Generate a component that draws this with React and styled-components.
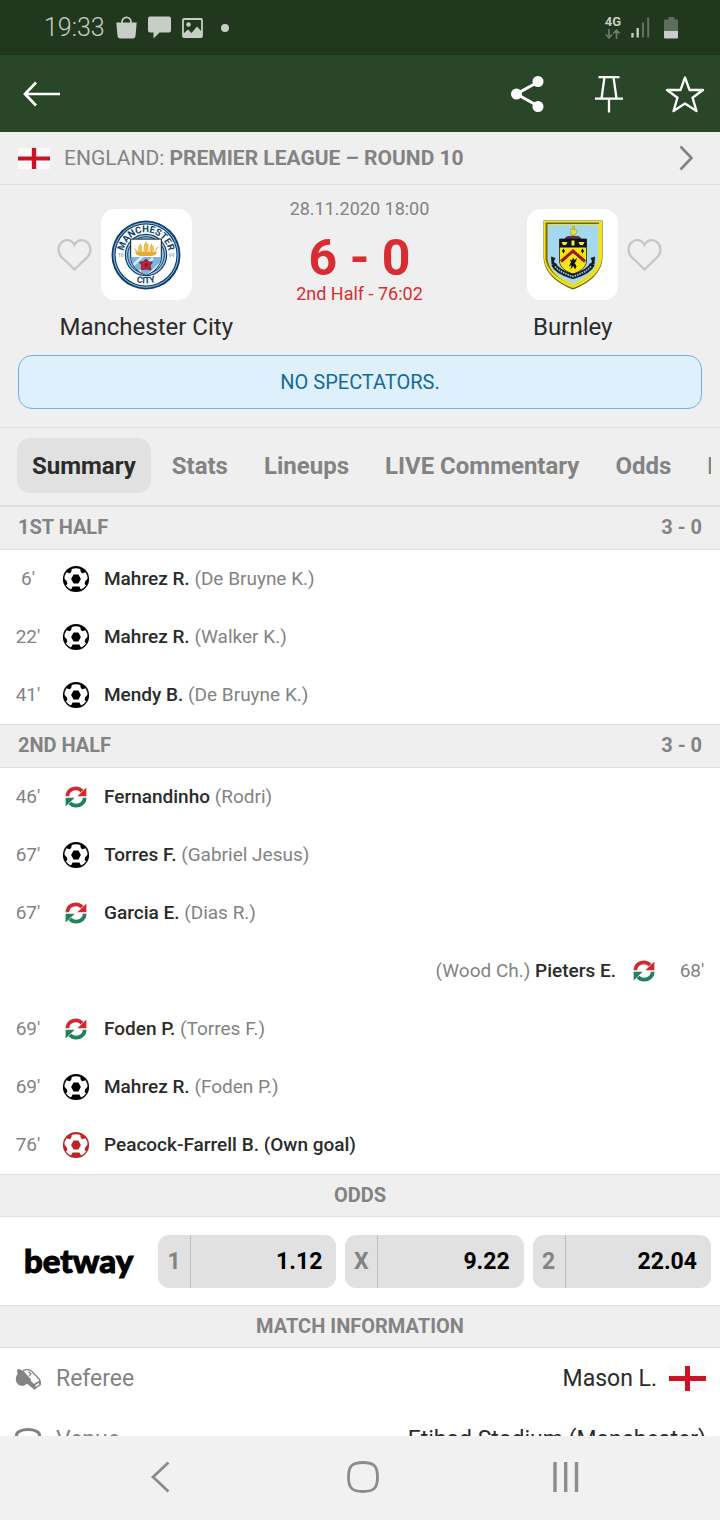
import React from "react";
import styled, { createGlobalStyle, css } from "styled-components";

const c = {
  status: "#21381f",
  bar: "#294728",
  panel: "#efefef",
  line: "#dfdfdf",
  chip: "#e1e1e1",
  muted: "#838383",
  ink: "#2b2b2b",
  red: "#d92c32",
  statusInk: "#c6cec6",
};

const GlobalStyle = createGlobalStyle`
  *, *::before, *::after { box-sizing: border-box; }
  body { margin: 0; background: #fff; font-family: Roboto, "Liberation Sans", sans-serif; color: ${c.ink}; }
  button { font: inherit; color: inherit; border: 0; padding: 0; background: none; cursor: pointer; }
  h1, h2, p, ul { margin: 0; padding: 0; font-weight: inherit; font-size: inherit; }
  ul { list-style: none; }
  svg { display: block; flex: none; }
`;

const Screen = styled.div`
  display: flex;
  flex-direction: column;
  height: 100vh;
`;

const StatusBar = styled.div`
  flex: none;
  display: flex;
  align-items: center;
  height: 55px;
  padding: 0 36px 0 44px;
  background: ${c.status};
  color: ${c.statusInk};
`;

const Clock = styled.time`
  font-size: 25px;
  font-weight: 300;
  line-height: 32px;
  width: 72px;
  white-space: nowrap;
`;

const StatusIcons = styled.div`
  display: flex;
  align-items: center;
  gap: 11px;
`;

const StatusRight = styled(StatusIcons)`
  margin-left: auto;
  gap: 10px;
`;

const Network = styled.div`
  display: flex;
  flex-direction: column;
  align-items: center;
  gap: 1px;
  font-size: 13px;
  font-weight: 700;
  line-height: 12px;
`;

const AppBar = styled.header`
  flex: none;
  display: flex;
  align-items: center;
  justify-content: space-between;
  height: 77px;
  padding: 0 15px 0 22px;
  background: ${c.bar};
  color: #fff;
`;

const Actions = styled.div`
  display: flex;
  align-items: center;
  gap: 42px;
`;

const IconButton = styled.button`
  display: flex;
  align-items: center;
  justify-content: center;
`;

const Content = styled.main`
  flex: 1;
  min-height: 0;
  overflow-y: auto;
  scrollbar-width: none;
`;

const League = styled.a`
  display: flex;
  align-items: center;
  height: 53px;
  padding: 0 26px 0 18px;
  background: ${c.panel};
  border-bottom: 1px solid ${c.line};
  color: ${c.muted};
  font-size: 21px;
  text-decoration: none;
  white-space: nowrap;
`;

const LeagueText = styled.span`
  flex: 1;
  padding-left: 14px;
`;

const MatchHeader = styled.section`
  padding: 12px 0 18px;
  background: ${c.panel};
  border-bottom: 1px solid ${c.line};
`;

const Teams = styled.div`
  display: grid;
  grid-template-columns: 1fr 134px 1fr;
  padding-right: 1px;
`;

const Team = styled.div`
  display: flex;
  flex-direction: column;
  align-items: center;
  gap: 11px;
  padding-top: 12px;
`;

const TeamBadges = styled.div`
  display: grid;
  grid-template-columns: 1fr auto 1fr;
  align-items: center;
  width: 100%;
`;

const Favourite = styled(IconButton)`
  grid-row: 1;
  grid-column: ${(p) => (p.$side === "left" ? 1 : 3)};
  justify-self: ${(p) => (p.$side === "left" ? "end" : "start")};
  padding: 0 9px;
`;

const Crest = styled.div`
  grid-column: 2;
  grid-row: 1;
  display: flex;
  align-items: center;
  justify-content: center;
  width: 91px;
  height: 91px;
  border-radius: 14px;
  background: #fff;
`;

const TeamName = styled.p`
  font-size: 24px;
  line-height: 32px;
  white-space: nowrap;
`;

const ScoreBox = styled.div`
  display: flex;
  flex-direction: column;
  align-items: center;
  white-space: nowrap;
  color: ${c.red};
`;

const Kickoff = styled.time`
  font-size: 18px;
  line-height: 24px;
  color: ${c.muted};
`;

const Score = styled.h1`
  font-size: 50px;
  font-weight: 700;
  line-height: 50px;
  padding: 12px 0 0;
`;

const MatchTime = styled.p`
  font-size: 18px;
  line-height: 22px;
`;

const Notice = styled.p`
  margin: 12px 18px 0;
  padding: 14px;
  border: 1px solid #6fb3de;
  border-radius: 14px;
  background: #def0fc;
  color: #17699b;
  font-size: 20px;
  line-height: 24px;
  text-align: center;
`;

const TabsBar = styled.div`
  background: ${c.panel};
  border-bottom: 2px solid ${c.line};
  padding-right: 9px;
`;

const Tabs = styled.nav`
  display: flex;
  gap: 6px;
  padding: 10px 0 12px 17px;
  overflow: hidden;
`;

const Tab = styled.button`
  flex: none;
  height: 55px;
  padding: 0 15px;
  border-radius: 13px;
  font-size: 24px;
  font-weight: 700;
  color: ${c.muted};
  ${(p) => p.$active && css`
    background: ${c.chip};
    color: ${c.ink};
  `}
`;

const SectionHead = styled.h2`
  display: flex;
  justify-content: ${(p) => (p.$center ? "center" : "space-between")};
  padding: 8px 18px ${(p) => (p.$center ? 9 : 10)}px;
  background: ${c.panel};
  border-top: ${(p) => (p.$first ? 0 : 1)}px solid ${c.line};
  border-bottom: 1px solid ${c.line};
  color: ${c.muted};
  font-size: 20px;
  font-weight: 700;
  line-height: 24px;
`;

const EventRow = styled.li`
  display: flex;
  flex-direction: ${(p) => (p.$away ? "row-reverse" : "row")};
  align-items: center;
  height: 58px;
  font-size: 19px;
  white-space: nowrap;
`;

const Minute = styled.span`
  width: 56px;
  padding-bottom: 2px;
  text-align: center;
  color: ${c.muted};
`;

const EventIcon = styled.span`
  display: flex;
  justify-content: center;
  width: 40px;
`;

const EventText = styled.span`
  padding: 0 8px 2px;
  color: ${c.muted};
`;

const Player = styled.span`
  font-weight: 500;
  color: ${c.ink};
`;

const OddsRow = styled.div`
  display: grid;
  grid-template-columns: 140px 1fr 1fr 1fr;
  gap: 9px;
  align-items: center;
  padding: 18px 9px 17px;
`;

const Bookmaker = styled.a`
  padding: 0 0 4px 15px;
  color: #000;
  font-family: Lato, Roboto, sans-serif;
  font-size: 33px;
  font-weight: 900;
  line-height: 40px;
  text-decoration: none;
  -webkit-text-stroke: 1px #000;
`;

const Odd = styled.button`
  display: flex;
  align-items: stretch;
  height: 53px;
  border-radius: 11px;
  background: ${c.chip};
  font-size: 23px;
  font-weight: 700;
  line-height: 53px;
`;

const OddLabel = styled.span`
  width: 33px;
  border-right: 1px solid #bdbdbd;
  color: ${c.muted};
`;

const OddValue = styled.span`
  flex: 1;
  padding-right: 14px;
  text-align: right;
  color: #000;
`;

const InfoRow = styled.li`
  display: flex;
  align-items: center;
  height: 61px;
  padding: 0 14px 0 15px;
  font-size: 23px;
  white-space: nowrap;
`;

const InfoLabel = styled.span`
  flex: 1;
  padding-left: 14px;
  color: ${c.muted};
`;

const InfoValue = styled.span`
  display: flex;
  align-items: center;
  gap: 12px;
`;

const SystemNav = styled.nav`
  flex: none;
  display: grid;
  grid-template-columns: repeat(3, 1fr);
  height: 84px;
  padding: 0 53px 2px 59px;
  background: #f1f1f1;
  color: #8c8c8c;
`;

function Flag({ width, height }) {
  return (
    <svg width={width} height={height} viewBox="0 0 37 25" preserveAspectRatio="none" role="img" aria-label="England">
      <rect width="37" height="25" fill="#fafafa" />
      <path d="M0 12.5H37M18.5 0V25" stroke="#cd1226" strokeWidth="5" />
    </svg>
  );
}

function Heart() {
  return (
    <svg width="35" height="33" viewBox="0 0 35 33" fill="none" stroke="#c6c6c6" strokeWidth="2.3">
      <path d="M17.5 31.500 4.500 19C1 15.500.300 9 4 5 8 .700 14.500 1.200 17.500 7 20.500 1.200 27 .700 31 5 34.700 9 34 15.500 30.500 19Z" />
    </svg>
  );
}

function CityCrest() {
  const navy = "#0f3e6e";
  return (
    <svg width="70" height="70" viewBox="0 0 70 70" role="img" aria-label="Manchester City crest">
      <defs>
        <path id="cityTop" d="M12.300 35A22.700 22.700 0 0 1 57.700 35" />
        <path id="cityLow" d="M6.500 35A28.500 28.500 0 0 0 63.500 35" />
        <clipPath id="cityShield"><path d="M20 20H50V36C50 46 42 52 35 54.500 28 52 20 46 20 36Z" /></clipPath>
      </defs>
      <circle cx="35" cy="35" r="34.500" fill={navy} />
      <circle cx="35" cy="35" r="32.200" fill="none" stroke="#9cc6e8" strokeWidth="1" />
      <circle cx="35" cy="35" r="30.500" fill="#fff" />
      <circle cx="35" cy="35" r="20.600" fill="#9cc6e8" stroke={navy} strokeWidth="1.200" />
      <circle cx="35" cy="35" r="18.300" fill="#9cc6e8" stroke={navy} strokeWidth="1" />
      <path d="M19.500 19H50.500V36C50.500 46.500 42 52.500 35 55.500 28 52.500 19.500 46.500 19.500 36Z" fill="#d6a63c" stroke={navy} strokeWidth="1" />
      <g clipPath="url(#cityShield)">
        <rect x="20.500" y="20" width="29" height="17" fill="#fff" />
        <rect x="20" y="37" width="30" height="20" fill="#7fb4e0" />
        <path d="M15 52 32 36M20 60 42 38M30 62 52 41" stroke="#d9ebf8" strokeWidth="2.500" />
      </g>
      <path d="M24 31.500H46C45.500 34.500 43 36 40.500 36H29.500C27 36 24.500 34.500 24 31.500Z" fill="#e6ac32" />
      <path d="M35 21.500V33M29.500 24V32M40.500 24V32M44 30.500 47 27M26 31.500 23.500 28.500" stroke="#d3982c" strokeWidth="1" />
      <path d="M33 23.500H37.500V31H32.500ZM27.500 25.500H31V31H26.500ZM39 25.500H42.500L43 31H38.500Z" fill="#eebd54" />
      <path d="M35 39 37.500 41.700 41.500 42 39.300 45.500 40 50 35 49 30 50 30.700 45.500 28.500 42 32.500 41.700Z" fill="#c41e3a" stroke="#5a1d28" strokeWidth=".7" />
      <circle cx="35" cy="45" r="1.800" fill="#7d1a30" />
      <g fill={navy} fontFamily="Roboto, sans-serif" fontWeight="700" textAnchor="middle">
        <text fontSize="9.500"><textPath href="#cityTop" startOffset="50%">MANCHESTER</textPath></text>
        <text fontSize="9"><textPath href="#cityLow" startOffset="50%">CITY</textPath></text>
      </g>
      <g fill="#8fb8da" fontFamily="Roboto, sans-serif" fontWeight="700" fontSize="5" textAnchor="middle">
        <text x="9.500" y="37">18</text>
        <text x="60.500" y="37">94</text>
      </g>
    </svg>
  );
}

function BurnleyCrest() {
  return (
    <svg width="60" height="70" viewBox="0 0 60 70" role="img" aria-label="Burnley crest">
      <path d="M.5.5H59.500V37C59.500 53 45 64 30 69.500 15 64 .5 53 .5 37Z" fill="#6f641a" />
      <path d="M1 1H59V37C58.800 52 45 62.500 30 68 15 62.500 1.200 52 1 37Z" fill="#efe51c" />
      <path d="M2.600 2.600H56V37C56 50 44 60 30 65.500 16 60 2.600 50 2.600 37Z" fill="#6f6522" />
      <path d="M4.500 4H56.500V37C56.500 50 44 60 30 65.500 16 60 4.500 50 4.500 37Z" fill="#e9e03a" />
      <path d="M5 5H55V37C55 48.500 43 58 30 63.500 17 58 5 48.500 5 37Z" fill="#a3d8ee" />
      <path d="M28 15V11.500C26.500 9 29 8 30 9.500L29.500 6.500 31.500 6 31 10C33 9 34.500 10 34 12L32 15Z" fill="#eee32a" stroke="#8a8222" strokeWidth=".5" />
      <path d="M22 18.500C25 15 27 17.500 30 16 33 17.500 35 15 38 18.500Z" fill="#8d1d3a" stroke="#23284f" strokeWidth=".8" />
      <path d="M16.500 19H43.500V41C43.500 48 36 52 30 54 24 52 16.500 48 16.500 41Z" fill="#f5e70f" stroke="#222" strokeWidth=".8" />
      <path d="M16.500 19H43.500V27.500H16.500Z" fill="#111" />
      <path d="M18.500 22H24.500L23 25H20ZM35.500 22H41.500L40 25H37Z" fill="#f1e556" />
      <path d="M28.500 20.500H31.500V25.500H28.500Z" fill="#f1e556" />
      <path d="M18 41.500 30 31 42 41.500" fill="none" stroke="#a3161f" strokeWidth="3" />
      <path d="M20.500 28.500 22 31 20.500 33.500 19 31ZM39.500 28.500 41 31 39.500 33.500 38 31Z" fill="#111" />
      <path d="M30 37.500 31.500 40 34 38 33 41.500 31.500 43 33.500 46 32 49.500 30.500 46 27.500 49.500 28.500 45 26 46.500 28 42 26.500 39.500 29 40.500Z" fill="#111" />
      <path d="M10.500 44C13 50 21 54 30 56.500 39 54 47 50 49.500 44" fill="none" stroke="#171c22" strokeWidth="5" />
      <path d="M12 46.500C16 51 23 54.500 30 56.500 37 54.500 44 51 48 46.500" fill="none" stroke="#a5cfe2" strokeWidth="1.600" strokeDasharray="1.600 .9" />
      <path d="M8 36.500 12.500 38 11 41 12.500 45 8.500 44ZM52 36.500 47.500 38 49 41 47.500 45 51.500 44Z" fill="#171c22" />
    </svg>
  );
}

function Ball({ color = "#000" }) {
  return (
    <svg width="28" height="28" viewBox="0 0 28 28" role="img" aria-label="Goal">
      <circle cx="14" cy="14" r="13.100" fill={color} />
      <path
        fill="#fff"
        d="M9.800 3.900Q14 2.400 18.200 3.900L18.900 7.300 20.500 8.300 23.500 7.300Q25.700 10.600 25.500 13.800L23.200 16.200 22.600 18.700 24 20.500Q22 23.300 19 24.500L17.400 21.600H10.600L9 24.500Q6 23.300 4 20.500L5.400 18.700 4.800 16.200 2.500 13.800Q2.300 10.600 4.500 7.300L7.500 8.300 9.100 7.300Z"
      />
      <path fill={color} d="M11.600 9.500H16.400L18.900 14 16.400 18.500H11.600L9.100 14Z" />
    </svg>
  );
}

function Swap() {
  return (
    <svg width="22" height="22" viewBox="0 0 22 22" role="img" aria-label="Substitution">
      <path d="M2.300 10.200C2.300 5.700 6 2.300 10.700 2.300 13.500 2.300 15.600 3.300 17 5.100" fill="none" stroke="#d2292f" strokeWidth="3.800" />
      <path d="M21.400 1.600V10.200H12.400Z" fill="#d2292f" />
      <path d="M19.700 11.800C19.700 16.300 16 19.700 11.300 19.700 8.500 19.700 6.400 18.700 5 16.900" fill="none" stroke="#22805c" strokeWidth="3.800" />
      <path d="M.6 20.400V11.800H9.600Z" fill="#22805c" />
    </svg>
  );
}

function Whistle() {
  return (
    <svg width="27" height="22" viewBox="0 0 27 22" fill={c.muted}>
      <path d="M2 2.300Q3.500.200 5.500 1.500L9 3.500 16 11.500 15 15 12 15.500C9.500 18.300 5.500 18.500 3 16.300.200 13.500.200 9 2.500 6Z" />
      <path d="M8 2.800C10 1.200 14.500 1.200 17 3.500L24.500 11.500Q25.800 13.500 25 16" fill="none" stroke={c.muted} strokeWidth="1.300" />
      <path d="M13.500 3.500 16 6 14 8" fill="none" stroke={c.muted} strokeWidth="1.200" />
      <path d="M12 9 21 18 18.500 21 9.500 13.500Z" />
      <path d="M19.500 16.500 24.500 13.500 25.200 16.500 19.500 20.800Z" fill="none" stroke={c.muted} strokeWidth="1.500" />
    </svg>
  );
}

function Stadium() {
  return (
    <svg width="27" height="24" viewBox="0 0 27 24" fill="none" stroke={c.muted} strokeWidth="3">
      <ellipse cx="13" cy="7" rx="11.500" ry="5.500" />
      <path d="M1.500 7V16C1.500 19.500 6.500 22 13 22S24.500 19.500 24.500 16V7" />
    </svg>
  );
}

const tabs = ["Summary", "Stats", "Lineups", "LIVE Commentary", "Odds", "H2H"];

const firstHalf = [
  { min: "6'", type: "goal", player: "Mahrez R.", extra: "(De Bruyne K.)" },
  { min: "22'", type: "goal", player: "Mahrez R.", extra: "(Walker K.)" },
  { min: "41'", type: "goal", player: "Mendy B.", extra: "(De Bruyne K.)" },
];

const secondHalf = [
  { min: "46'", type: "sub", player: "Fernandinho", extra: "(Rodri)" },
  { min: "67'", type: "goal", player: "Torres F.", extra: "(Gabriel Jesus)" },
  { min: "67'", type: "sub", player: "Garcia E.", extra: "(Dias R.)" },
  { min: "68'", type: "sub", player: "Pieters E.", extra: "(Wood Ch.)", away: true },
  { min: "69'", type: "sub", player: "Foden P.", extra: "(Torres F.)" },
  { min: "69'", type: "goal", player: "Mahrez R.", extra: "(Foden P.)" },
  { min: "76'", type: "own", player: "Peacock-Farrell B. (Own goal)" },
];

const odds = [["1", "1.12"], ["X", "9.22"], ["2", "22.04"]];

function Events({ items }) {
  return (
    <ul>
      {items.map((e, i) => (
        <EventRow key={i} $away={e.away}>
          <Minute>{e.min}</Minute>
          <EventIcon>{e.type === "sub" ? <Swap /> : <Ball color={e.type === "own" ? "#bd2629" : "#000"} />}</EventIcon>
          <EventText>
            {e.away && <>{e.extra} </>}
            <Player>{e.player}</Player>
            {!e.away && e.extra && <> {e.extra}</>}
          </EventText>
        </EventRow>
      ))}
    </ul>
  );
}

export default function App() {
  return (
    <Screen>
      <GlobalStyle />
      <StatusBar>
        <Clock>19:33</Clock>
        <StatusIcons>
          <svg width="21" height="23" viewBox="0 0 21 23" fill={c.statusInk}>
            <path d="M.3 6.500H20.700L19.500 20Q19.200 22.500 16.500 22.500H4.500Q1.800 22.500 1.500 20Z" />
            <path d="M6 9V6.500C6 -.300 15 -.300 15 6.500V9" fill="none" stroke={c.statusInk} strokeWidth="1.800" />
          </svg>
          <svg width="23" height="23" viewBox="0 0 23 23" fill={c.statusInk}>
            <path d="M2 .500H21Q23 .500 23 2.500V14.500Q23 16.500 21 16.500H11.500L5.500 22.500V16.500H2Q0 16.500 0 14.500V2.500Q0 .500 2 .500Z" />
          </svg>
          <svg width="21" height="20" viewBox="0 0 21 20" fill={c.statusInk}>
            <rect x="1" y="1" width="19" height="18" rx="1" fill="none" stroke={c.statusInk} strokeWidth="1.800" />
            <circle cx="6.500" cy="6.500" r="2.300" />
            <path d="M1 16 6 11.500 9.500 15 15 8.500 20 14V19H1Z" />
          </svg>
          <svg width="30" height="8" viewBox="0 0 30 8" fill={c.statusInk}>
            <circle cx="11" cy="4" r="4" />
          </svg>
        </StatusIcons>
        <StatusRight>
          <Network>
            <span>4G</span>
            <svg width="16" height="10" viewBox="0 0 16 10" fill="none" stroke="#6b7d6b" strokeWidth="1.700">
              <path d="M4 0V9M.800 5.500 4 8.800 7.200 5.500M11.500 10V1M8.300 4.500 11.500 1.200 14.700 4.500" />
            </svg>
          </Network>
          <svg width="19" height="21" viewBox="0 0 19 21">
            <path d="M1.500 16V20.500M6.700 11V20.500" stroke={c.statusInk} strokeWidth="2.400" />
            <path d="M12 5.500V20.500M17.200 .500V20.500" stroke="#64755f" strokeWidth="2" />
          </svg>
          <svg width="24" height="22" viewBox="0 0 24 22">
            <path d="M8.500 0H14.500V2.500H18V14.500H4V2.500H8.500Z" fill="#5d6f5c" />
            <path d="M4 14H18V20.500Q18 21.500 17 21.500H5Q4 21.500 4 20.500Z" fill={c.statusInk} />
          </svg>
        </StatusRight>
      </StatusBar>

      <AppBar>
        <IconButton aria-label="Back">
          <svg width="38" height="26" viewBox="0 0 38 26" fill="none" stroke="#fff" strokeWidth="2.700">
            <path d="M38 13H3M14 1.500 3 13 14 24.500" />
          </svg>
        </IconButton>
        <Actions>
          <IconButton aria-label="Share">
            <svg width="48" height="36" viewBox="0 0 48 36" fill="#fff">
              <path d="M33 6 11.500 18 33 30" fill="none" stroke="#fff" strokeWidth="3" />
              <circle cx="33" cy="5.500" r="5.500" />
              <circle cx="11.500" cy="18" r="5.500" />
              <circle cx="33" cy="30.500" r="5.500" />
            </svg>
          </IconButton>
          <IconButton aria-label="Pin">
            <svg width="28" height="38" viewBox="0 0 28 38" fill="none" stroke="#fff" strokeWidth="2.300">
              <path d="M3.500 2.200H24.500M9.500 2.200 6.500 23.500M18.500 2.200 21.500 23.500M0 23.600H28M14 23.600V37.500" />
            </svg>
          </IconButton>
          <IconButton aria-label="Add to favourites">
            <svg width="40" height="38" viewBox="0 0 40 38" fill="none" stroke="#fff" strokeWidth="2.300" strokeLinejoin="round">
              <path d="M20 2.500 24.500 15H38L27.500 22.700 31.500 36 20 28.500 8.500 36 12.500 22.700 2 15H15.500Z" />
            </svg>
          </IconButton>
        </Actions>
      </AppBar>

      <Content>
        <League href="#league">
          <Flag width={32} height={21} />
          <LeagueText>ENGLAND: <b>PREMIER LEAGUE – ROUND 10</b></LeagueText>
          <svg width="15" height="26" viewBox="0 0 15 26" fill="none" stroke={c.muted} strokeWidth="2.600">
            <path d="M1.500 1.500 12.500 13 1.500 24.500" />
          </svg>
        </League>

        <MatchHeader>
          <Teams>
            <Team>
              <TeamBadges>
                <Favourite $side="left" aria-label="Follow Manchester City"><Heart /></Favourite>
                <Crest><CityCrest /></Crest>
              </TeamBadges>
              <TeamName>Manchester City</TeamName>
            </Team>
            <ScoreBox>
              <Kickoff>28.11.2020 18:00</Kickoff>
              <Score>6 - 0</Score>
              <MatchTime>2nd Half - 76:02</MatchTime>
            </ScoreBox>
            <Team>
              <TeamBadges>
                <Favourite $side="right" aria-label="Follow Burnley"><Heart /></Favourite>
                <Crest><BurnleyCrest /></Crest>
              </TeamBadges>
              <TeamName>Burnley</TeamName>
            </Team>
          </Teams>
          <Notice>NO SPECTATORS.</Notice>
        </MatchHeader>

        <TabsBar>
          <Tabs>
            {tabs.map((t, i) => <Tab key={t} $active={i === 0}>{t}</Tab>)}
          </Tabs>
        </TabsBar>

        <SectionHead $first><span>1ST HALF</span><span>3 - 0</span></SectionHead>
        <Events items={firstHalf} />
        <SectionHead><span>2ND HALF</span><span>3 - 0</span></SectionHead>
        <Events items={secondHalf} />

        <SectionHead $center>ODDS</SectionHead>
        <OddsRow>
          <Bookmaker href="#betway">betway</Bookmaker>
          {odds.map(([label, value]) => (
            <Odd key={label}>
              <OddLabel>{label}</OddLabel>
              <OddValue>{value}</OddValue>
            </Odd>
          ))}
        </OddsRow>

        <SectionHead $center>MATCH INFORMATION</SectionHead>
        <ul>
          <InfoRow>
            <Whistle />
            <InfoLabel>Referee</InfoLabel>
            <InfoValue>Mason L. <Flag width={37} height={25} /></InfoValue>
          </InfoRow>
          <InfoRow>
            <Stadium />
            <InfoLabel>Venue</InfoLabel>
            <InfoValue>Etihad Stadium (Manchester)</InfoValue>
          </InfoRow>
        </ul>
      </Content>

      <SystemNav>
        <IconButton aria-label="Back">
          <svg width="20" height="32" viewBox="0 0 20 32" fill="none" stroke="currentColor" strokeWidth="2.800">
            <path d="M18.500 1.500 3 16 18.500 30.500" />
          </svg>
        </IconButton>
        <IconButton aria-label="Home">
          <svg width="32" height="32" viewBox="0 0 32 32" fill="none" stroke="currentColor" strokeWidth="2.800">
            <path d="M16 1.500C27 1.500 30.500 5 30.500 16S27 30.500 16 30.500 1.500 27 1.500 16 5 1.500 16 1.500Z" />
          </svg>
        </IconButton>
        <IconButton aria-label="Recent apps">
          <svg width="26" height="30" viewBox="0 0 26 30" stroke="currentColor" strokeWidth="3.400">
            <path d="M2 0V30M12.700 0V30M23.500 0V30" />
          </svg>
        </IconButton>
      </SystemNav>
    </Screen>
  );
}
